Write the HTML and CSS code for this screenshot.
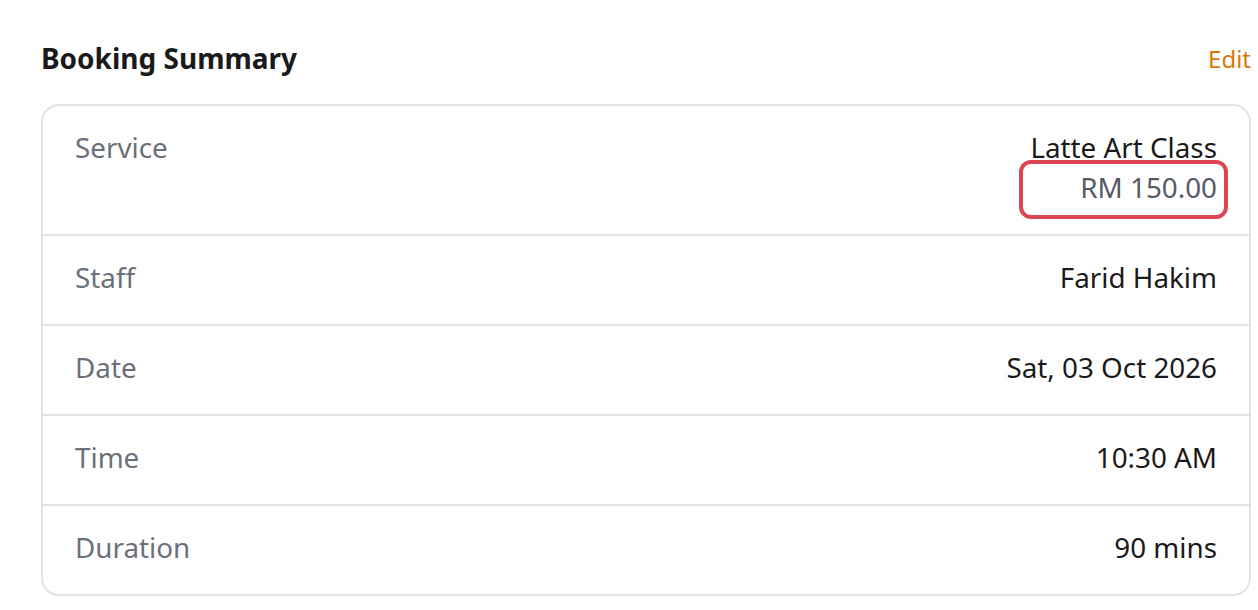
FILE: index.html
```html
<!DOCTYPE html>
<html lang="en">
<head>
  <meta charset="UTF-8" />
  <meta name="viewport" content="width=device-width, initial-scale=1.0"/>
  <title>Booking Summary</title>
  <link rel="stylesheet" href="styles.css">
</head>
<body>

  <div class="summary-head">
    <h2>Booking Summary</h2>
    <a href="#" class="edit-link">Edit</a>
  </div>

  <div class="summary-card">
    <div class="summary-row">
      <span class="label">Service</span>
      <div class="value">
        <div>Latte Art Class</div>
        <div class="price">RM 150.00<span class="highlight"></span></div>
      </div>
    </div>
    <div class="summary-row">
      <span class="label">Staff</span>
      <div class="value">Farid Hakim</div>
    </div>
    <div class="summary-row">
      <span class="label">Date</span>
      <div class="value">Sat, 03 Oct 2026</div>
    </div>
    <div class="summary-row">
      <span class="label">Time</span>
      <div class="value">10:30 AM</div>
    </div>
    <div class="summary-row">
      <span class="label">Duration</span>
      <div class="value">90 mins</div>
    </div>
  </div>

</body>
</html>
```

FILE: styles.css
```css
body {
  margin: 0;
  font-family: 'Noto Sans', 'Open Sans', sans-serif;
  background-color: #ffffff;
  color: #1a1a1a;
  padding: 39px 7px 0 41px;
}
.summary-head {
  display: flex;
  justify-content: space-between;
  align-items: center;
  margin-bottom: 27px;
}
.summary-head h2 {
  margin: 0;
  font-size: 28px;
  font-weight: 700;
  line-height: 38px;
  color: #1a1a1a;
}
.edit-link {
  font-size: 24px;
  color: #d97706;
  text-decoration: none;
}
.summary-card {
  border: 2px solid #e3e3e3;
  border-radius: 18px;
}
.summary-row {
  display: flex;
  justify-content: space-between;
  align-items: flex-start;
  padding: 21px 32px 27px;
  font-size: 27.8px;
  line-height: 40px;
  border-bottom: 2px solid #e3e3e3;
}
.summary-row:last-child {
  border-bottom: none;
}
.label {
  color: #6b6f7a;
}
.value {
  text-align: right;
}
.price {
  position: relative;
  color: #555b66;
}
.highlight {
  position: absolute;
  right: -11px;
  top: -7px;
  width: 201px;
  height: 51px;
  border: 4px solid #dc4552;
  border-radius: 12px;
}
```
